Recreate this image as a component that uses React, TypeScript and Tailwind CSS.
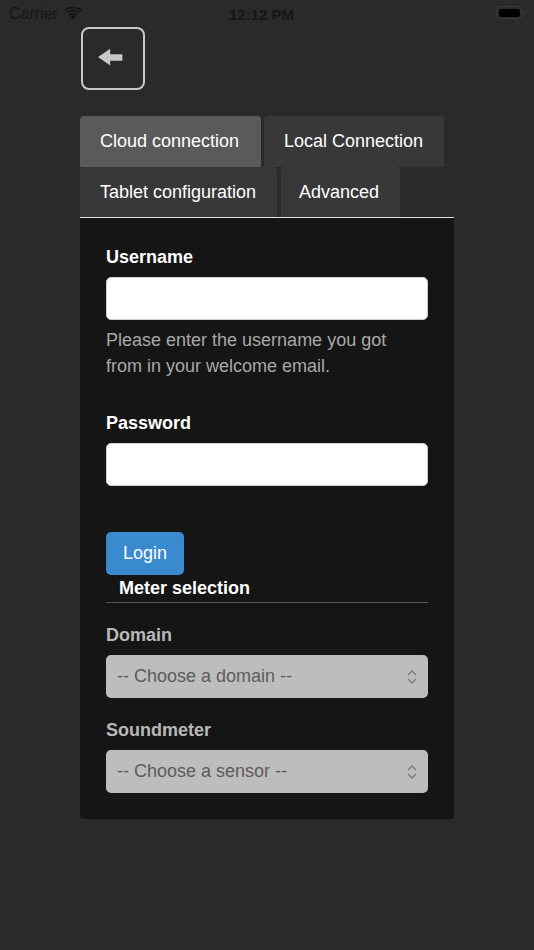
import React from "react";

const font = { fontFamily: '"Liberation Sans", Arial, sans-serif' };

function Chevrons() {
  return (
    <svg width="12" height="16" viewBox="0 0 12 16" fill="none">
      <path d="M2 6 L6 2 L10 6" stroke="#7a7a7a" strokeWidth="1.4" />
      <path d="M2 10 L6 14 L10 10" stroke="#7a7a7a" strokeWidth="1.4" />
    </svg>
  );
}

export default function App() {
  return (
    <div className="w-[534px] h-[950px] bg-[#2a2a2a] overflow-hidden" style={font}>
      {/* status bar */}
      <div className="h-[27px] relative flex items-center px-[9px] text-[16px] text-[#161616]">
        <span>Carrier</span>
        <svg className="ml-[6px]" width="18" height="13" viewBox="0 0 18 13">
          <path d="M9 12.5 L6.3 9.6 A4 4 0 0 1 11.7 9.6 Z" fill="#161616" />
          <path d="M4.4 7.6 A6.6 6.6 0 0 1 13.6 7.6 L12.4 8.8 A5 5 0 0 0 5.6 8.8 Z" fill="#161616" />
          <path d="M2.2 5.4 A9.8 9.8 0 0 1 15.8 5.4 L14.6 6.6 A8.2 8.2 0 0 0 3.4 6.6 Z" fill="#161616" />
          <path d="M0 3.2 A13 13 0 0 1 18 3.2 L16.8 4.4 A11.4 11.4 0 0 0 1.2 4.4 Z" fill="#161616" />
        </svg>
        <span className="absolute left-[229px] top-[4px] text-[15px] font-semibold">12:12 PM</span>
        <div className="absolute left-[496px] top-[6px] flex items-center">
          <div className="w-[26px] h-[13px] rounded-[4px] border border-[#3a3a3a] p-[1.5px]">
            <div className="w-full h-full rounded-[2.5px] bg-black" />
          </div>
          <div className="w-[1.5px] h-[4px] bg-[#3a3a3a] rounded-r ml-[1px]" />
        </div>
      </div>

      <div className="ml-[80px] w-[374px]">
        {/* back button */}
        <div className="ml-[1px] w-[64px] h-[63px] rounded-[8px] border-2 border-[#c8c8c8] flex items-center justify-center">
          <svg width="64" height="63" viewBox="0 0 64 63">
            <polygon points="16,30 29,21 29,27 42,27 42,34 29,34 29,39" fill="#c8c8c8" />
          </svg>
        </div>

        {/* tabs */}
        <div className="mt-[26px] flex flex-wrap border-b border-[#e0e0e0] text-[18px] text-white">
          <div className="h-[51px] px-[20px] flex items-center bg-[#5a5a5a] rounded-t-[4px] mr-[3px] w-[181px] whitespace-nowrap">Cloud connection</div>
          <div className="h-[51px] px-[20px] flex items-center bg-[#383838] rounded-t-[4px] w-[180px] whitespace-nowrap">Local Connection</div>
          <div className="h-[50px] px-[20px] flex items-center bg-[#383838] rounded-t-[4px] mr-[4px] w-[197px] whitespace-nowrap">Tablet configuration</div>
          <div className="h-[50px] px-[18px] flex items-center bg-[#383838] rounded-t-[4px] w-[119px] whitespace-nowrap">Advanced</div>
        </div>

        {/* panel */}
        <div className="bg-[#151515] rounded-b-[4px] px-[26px] pt-[29px] pb-[26px]">
          <div className="text-[18px] leading-[20px] font-bold text-white">Username</div>
          <div className="mt-[10px] h-[43px] bg-white rounded-[5px] border border-[#cfcfcf]" />
          <div className="mt-[7px] text-[18px] leading-[26px] text-[#a8a8a8]">
            Please enter the username you got<br />from in your welcome email.
          </div>
          <div className="mt-[34px] text-[18px] leading-[20px] font-bold text-white">Password</div>
          <div className="mt-[10px] h-[43px] bg-white rounded-[5px] border border-[#cfcfcf]" />
          <div className="mt-[46px] w-[78px] h-[43px] rounded-[5px] bg-[#3a8ad0] text-white text-[18px] flex items-center justify-center">
            Login
          </div>
          <div className="mt-[3px] pl-[13px] pb-[4px] border-b border-[#555555] text-[18px] leading-[20px] font-bold text-white">
            Meter selection
          </div>
          <div className="mt-[22px] text-[18px] leading-[20px] font-bold text-[#b8b8b8]">Domain</div>
          <div className="mt-[10px] h-[43px] bg-[#bdbdbd] rounded-[5px] flex items-center justify-between pl-[11px] pr-[10px] text-[18px] text-[#5c5c5c]">
            <span>-- Choose a domain --</span>
            <Chevrons />
          </div>
          <div className="mt-[22px] text-[18px] leading-[20px] font-bold text-[#b8b8b8]">Soundmeter</div>
          <div className="mt-[10px] h-[43px] bg-[#bdbdbd] rounded-[5px] flex items-center justify-between pl-[11px] pr-[10px] text-[18px] text-[#5c5c5c]">
            <span>-- Choose a sensor --</span>
            <Chevrons />
          </div>
        </div>
      </div>
    </div>
  );
}
